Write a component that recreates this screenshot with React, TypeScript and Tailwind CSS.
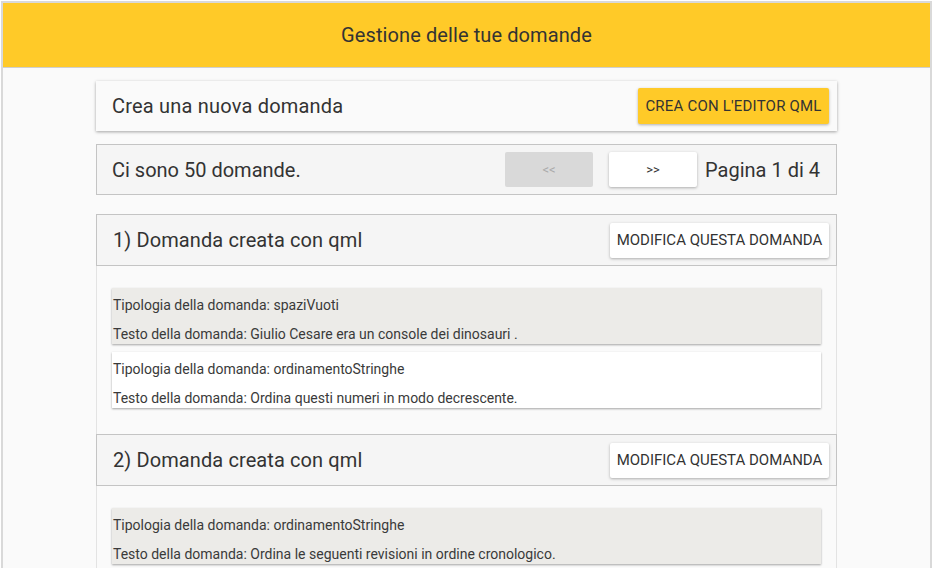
import React from "react";

const font = { fontFamily: "Roboto, 'Liberation Sans', sans-serif" };

function Item({ bg, tipo, testo }: { bg: string; tipo: string; testo: string }) {
  return (
    <div className={`${bg} pt-[7px] pl-[1px] text-[14px] text-[#3a3a3a] shadow-[0_1px_2px_rgba(0,0,0,0.35)]`}>
      <p className="leading-[20px]">Tipologia della domanda: {tipo}</p>
      <p className="leading-[20px] mt-[9px]">Testo della domanda: {testo}</p>
    </div>
  );
}

function Question({ n, items }: { n: number; items: { tipo: string; testo: string }[] }) {
  return (
    <div className="border-x border-[#e3e3e3]">
      <div className="flex items-center justify-between h-[52px] bg-[#f5f5f5] border border-[#c4c4c4] -mx-px pl-[16px] pr-[7px]">
        <span className="text-[20px] text-[#333] tracking-[0.1px]">{n}) Domanda creata con qml</span>
        <button className="h-[35px] w-[219px] bg-white text-[15px] text-[#333] rounded-[2px] shadow-[0_1px_3px_rgba(0,0,0,0.3)]">
          MODIFICA QUESTA DOMANDA
        </button>
      </div>
      <div className="px-[15px] pt-[22px] pb-[26px] flex flex-col gap-[8px]">
        {items.map((it, i) => (
          <Item key={i} bg={i % 2 === 0 ? "bg-[#ecebe8]" : "bg-white"} tipo={it.tipo} testo={it.testo} />
        ))}
      </div>
    </div>
  );
}

export default function App() {
  return (
    <div style={font} className="w-[934px] h-[568px] overflow-hidden bg-white">
      <div className="ml-[1px] mt-[1px] w-[931px] h-[600px] border-2 border-[#d9d9d9] bg-[#fafafa]">
        <div className="h-[65px] bg-[#ffca28] border-b border-[#cfcfcf] flex items-center justify-center">
          <h1 className="text-[20px] text-[#333] -mt-[1px] tracking-[0.1px]">Gestione delle tue domande</h1>
        </div>
        <div className="w-[741px] mx-auto pt-[13px]">
          <div className="h-[50px] bg-[#fafafa] shadow-[0_1px_3px_rgba(0,0,0,0.35)] flex items-center justify-between pl-[16px] pr-[8px]">
            <span className="text-[20px] text-[#333] tracking-[0.2px]">Crea una nuova domanda</span>
            <button className="h-[36px] w-[191px] bg-[#ffca28] rounded-[2px] text-[15px] text-[#333] tracking-[0.2px] shadow-[0_1px_3px_rgba(0,0,0,0.3)]">
              CREA CON L'EDITOR QML
            </button>
          </div>
          <div className="mt-[13px] h-[51px] bg-[#f5f5f5] border border-[#c4c4c4] flex items-center pl-[15px] pr-[16px]">
            <span className="text-[20px] text-[#333] flex-1">Ci sono 50 domande.</span>
            <button className="h-[35px] w-[88px] bg-[#d9d9d9] rounded-[2px] text-[13px] text-[#aaa]">&lt;&lt;</button>
            <button className="ml-[16px] h-[35px] w-[88px] bg-white rounded-[2px] text-[13px] text-[#333] shadow-[0_1px_3px_rgba(0,0,0,0.3)]">&gt;&gt;</button>
            <span className="ml-[8px] text-[20px] text-[#333]">Pagina 1 di 4</span>
          </div>
          <div className="mt-[19px]">
            <Question
              n={1}
              items={[
                { tipo: "spaziVuoti", testo: "Giulio Cesare era un console dei dinosauri ." },
                { tipo: "ordinamentoStringhe", testo: "Ordina questi numeri in modo decrescente." },
              ]}
            />
            <Question
              n={2}
              items={[
                { tipo: "ordinamentoStringhe", testo: "Ordina le seguenti revisioni in ordine cronologico." },
              ]}
            />
          </div>
        </div>
      </div>
    </div>
  );
}
